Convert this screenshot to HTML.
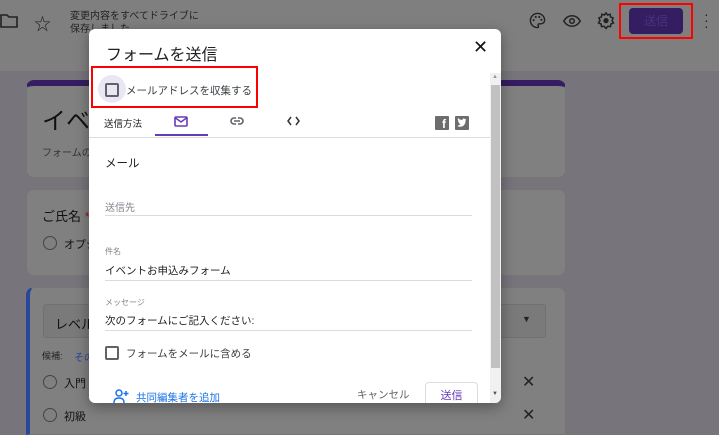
<!DOCTYPE html>
<html style="width:719px;height:435px;overflow:hidden"><head><meta charset="utf-8"><style>
*{box-sizing:border-box;margin:0;padding:0}
body{width:719px;height:435px;overflow:hidden;position:relative;background:#77747b;font-family:"Liberation Sans","Noto Sans CJK JP",sans-serif;color:#202124}
.hdr{position:absolute;left:0;top:0;width:719px;height:71px;background:#7f7f7f}
.card{position:absolute;left:26px;width:540px;background:#808080;border-radius:8px;border:1px solid #767676}
.abs{position:absolute}
.dlg{position:absolute;left:89px;top:29px;width:412px;height:374px;background:#fff;border-radius:6px;box-shadow:0 4px 14px rgba(0,0,0,.35);overflow:hidden}
.t{position:absolute;white-space:nowrap}
.line{position:absolute;left:16px;width:367px;height:1px;background:#dadce0}
</style></head><body>
<div class="hdr"></div>
<svg class="abs" style="left:0;top:12px" width="18" height="18" viewBox="0 0 18 18"><path d="M1 3h6l2 2h8v10H1z" fill="none" stroke="#222" stroke-width="1.6"/></svg>
<div class="t" style="left:34px;top:10px;font-size:17px;color:#222">☆</div>
<div class="t" style="left:70px;top:10px;font-size:10px;line-height:13px;color:#222">変更内容をすべてドライブに<br>保存しました</div>
<svg class="abs" style="left:529px;top:12px" width="17" height="17" viewBox="0 0 24 24"><path d="M12 2a10 10 0 0 0 0 20c1 0 1.5-.8 1.5-1.5 0-1-.8-1.3-.8-2.2 0-1 .8-1.6 1.8-1.6H17a5 5 0 0 0 5-5C22 6 17.5 2 12 2z" fill="none" stroke="#222" stroke-width="2"/><circle cx="6.5" cy="11.5" r="1.5" fill="#222"/><circle cx="9.5" cy="7" r="1.5" fill="#222"/><circle cx="14.5" cy="7" r="1.5" fill="#222"/><circle cx="17.5" cy="11" r="1.5" fill="#222"/></svg>
<svg class="abs" style="left:563px;top:14px" width="18" height="14" viewBox="0 0 24 16"><path d="M1 8c3-5 7-7 11-7s8 2 11 7c-3 5-7 7-11 7S4 13 1 8z" fill="none" stroke="#222" stroke-width="2"/><circle cx="12" cy="8" r="3" fill="none" stroke="#222" stroke-width="2"/></svg>
<svg class="abs" style="left:597px;top:12px" width="18" height="18" viewBox="0 0 24 24"><path d="M12 1l2 3 3.5-1 .5 3.5L21.5 8 20 11.5 22 14.5l-3.5 1.5-.5 3.5-3.5-.5L12 22l-2.5-3-3.5.5-.5-3.5L2 14.5 4 11.5 2.5 8 6 6.5 6.5 3 10 4z" fill="none" stroke="#222" stroke-width="2"/><circle cx="12" cy="11.5" r="3.5" fill="#222"/></svg>
<div class="abs" style="left:629px;top:8px;width:54px;height:26px;background:#341d61;border-radius:4px;color:#4a3380;font-size:12px;text-align:center;line-height:26px">送信</div>
<div class="abs" style="left:619px;top:3px;width:74px;height:36px;border:2px solid #f00"></div>
<div class="t" style="left:704px;top:11px;font-size:14px;line-height:6px;color:#222">·<br>·<br>·</div>

<div class="card" style="top:80px;height:98px;border-top:6px solid #341d61"></div>
<div class="t" style="left:42px;top:101px;font-size:24px;color:#111">イベ</div>
<div class="t" style="left:42px;top:144px;font-size:10px;color:#333">フォームの</div>
<div class="card" style="top:189px;height:87px"></div>
<div class="t" style="left:42px;top:206px;font-size:13px;color:#111">ご氏名 <span style="color:#8b1a1a">*</span></div>
<div class="abs" style="left:43px;top:236px;width:14px;height:14px;border:1.5px solid #444;border-radius:50%"></div>
<div class="t" style="left:64px;top:236px;font-size:11px;color:#111">オプシ</div>
<div class="card" style="top:287px;height:148px;border-left:4px solid #27479a;border-bottom-left-radius:0;border-bottom-right-radius:0"></div>
<div class="abs" style="left:43px;top:304px;width:503px;height:34px;background:#7a7a7a;border:1px solid #717171;border-radius:3px"></div>
<div class="t" style="left:55px;top:314px;font-size:13px;color:#111">レベル</div>
<div class="t" style="left:522px;top:314px;font-size:9px;color:#222">▼</div>
<div class="t" style="left:42px;top:349px;font-size:9px;color:#222">候補:</div>
<div class="t" style="left:74px;top:349px;font-size:10px;color:#27479a">その</div>
<div class="abs" style="left:43px;top:375px;width:14px;height:14px;border:1.5px solid #444;border-radius:50%"></div>
<div class="t" style="left:64px;top:375px;font-size:11px;color:#111">入門</div>
<div class="abs" style="left:43px;top:408px;width:14px;height:14px;border:1.5px solid #444;border-radius:50%"></div>
<div class="t" style="left:64px;top:408px;font-size:11px;color:#111">初級</div>
<div class="t" style="left:522px;top:372px;font-size:16px;color:#222">✕</div>
<div class="t" style="left:522px;top:405px;font-size:16px;color:#222">✕</div>

<div class="dlg">
<div class="t" style="left:17px;top:12px;font-size:16px;color:#202124">フォームを送信</div>
<div class="t" style="left:384px;top:8px;font-size:18px;color:#111">✕</div>
<div class="abs" style="left:9px;top:46px;width:28px;height:28px;border-radius:50%;background:#ebe6f3"></div>
<div class="abs" style="left:16px;top:54px;width:14px;height:14px;border:2px solid #5f6368;border-radius:2px"></div>
<div class="t" style="left:37px;top:54px;font-size:10.5px;color:#3c4043">メールアドレスを収集する</div>
<div class="t" style="left:15px;top:87px;font-size:9.5px;color:#202124">送信方法</div>
<svg class="abs" style="left:85px;top:87px" width="14" height="11" viewBox="0 0 14 11"><rect x="1" y="1" width="12" height="9" rx="1" fill="none" stroke="#673ab7" stroke-width="1.6"/><path d="M1.5 2l5.5 4 5.5-4" fill="none" stroke="#673ab7" stroke-width="1.5"/></svg>
<div class="abs" style="left:66px;top:105px;width:53px;height:2px;background:#673ab7"></div>
<svg class="abs" style="left:141px;top:88px" width="14" height="8" viewBox="0 0 14 8"><rect x="1" y="1" width="12" height="6" rx="3" fill="none" stroke="#5f6368" stroke-width="1.6"/><path d="M4 4h6" stroke="#5f6368" stroke-width="1.6"/><path d="M6 1h2M6 7h2" stroke="#fff" stroke-width="1.8"/></svg>
<svg class="abs" style="left:198px;top:87px" width="13" height="10" viewBox="0 0 13 10"><path d="M4 1L1 5l3 4M9 1l3 4-3 4" fill="none" stroke="#333" stroke-width="1.5"/></svg>
<div class="abs" style="left:346px;top:87px;width:14px;height:14px;background:#6d6d6d;border-radius:1px;color:#fff;font-size:12px;font-weight:bold;text-align:right;padding-right:3px;line-height:16px">f</div>
<div class="abs" style="left:366px;top:87px;width:14px;height:14px;background:#6d6d6d;border-radius:1px"><svg width="14" height="14" viewBox="0 0 14 14"><path d="M2.5 10c2 1.3 5.5 1 7-1.5 1-1.6 1-3.3 1-4l1-1-1.2.2.8-1-1.3.4C9 2 7.5 2.5 7.3 4c-1.8 0-3.3-1-4.3-2-.6 1.3 0 2.5.7 3L3 4.8c0 1 .6 1.8 1.6 2H3.8c.3.8 1 1.3 1.8 1.3-1 .8-2 1.1-3.1 1.9z" fill="#fff"/></svg></div>
<div class="abs" style="left:0;top:108px;width:401px;height:1px;background:#dadce0"></div>
<div class="t" style="left:16px;top:126px;font-size:11.5px;color:#202124">メール</div>
<div class="t" style="left:16px;top:170px;font-size:10px;color:#80868b">送信先</div>
<div class="line" style="top:186px"></div>
<div class="t" style="left:16px;top:217px;font-size:8px;color:#80868b">件名</div>
<div class="t" style="left:16px;top:234px;font-size:10.5px;color:#202124">イベントお申込みフォーム</div>
<div class="line" style="top:251px"></div>
<div class="t" style="left:16px;top:268px;font-size:8px;color:#80868b">メッセージ</div>
<div class="t" style="left:16px;top:284px;font-size:10.5px;color:#202124">次のフォームにご記入ください:</div>
<div class="line" style="top:301px"></div>
<div class="abs" style="left:16px;top:317px;width:14px;height:14px;border:2px solid #5f6368;border-radius:2px"></div>
<div class="t" style="left:37px;top:317px;font-size:10.5px;color:#3c4043">フォームをメールに含める</div>
<svg class="abs" style="left:24px;top:360px" width="16" height="14" viewBox="0 0 16 14"><circle cx="6" cy="4" r="3" fill="none" stroke="#1a73e8" stroke-width="1.5"/><path d="M1 14c0-4 2-5 5-5s5 1 5 5" fill="none" stroke="#1a73e8" stroke-width="1.5"/><path d="M13 2v5M10.5 4.5h5" stroke="#1a73e8" stroke-width="1.5"/></svg>
<div class="t" style="left:47px;top:361px;font-size:10.5px;color:#1a73e8">共同編集者を追加</div>
<div class="t" style="left:268px;top:358px;font-size:10.5px;color:#5f6368">キャンセル</div>
<div class="abs" style="left:336px;top:353px;width:53px;height:30px;border:1px solid #dadce0;border-radius:4px;color:#673ab7;font-size:11px;text-align:center;line-height:26px">送信</div>
<div class="abs" style="left:401px;top:44px;width:11px;height:330px;background:#f1f1f1"></div>
<div class="abs" style="left:402px;top:56px;width:9px;height:283px;background:#c1c1c1"></div>
<div class="t" style="left:403px;top:45px;font-size:6px;color:#999">▲</div>
<div class="t" style="left:403px;top:362px;font-size:6px;color:#555">▼</div>
</div>
<div class="abs" style="left:91px;top:66px;width:167px;height:42px;border:2px solid #f00"></div>
</body></html>
